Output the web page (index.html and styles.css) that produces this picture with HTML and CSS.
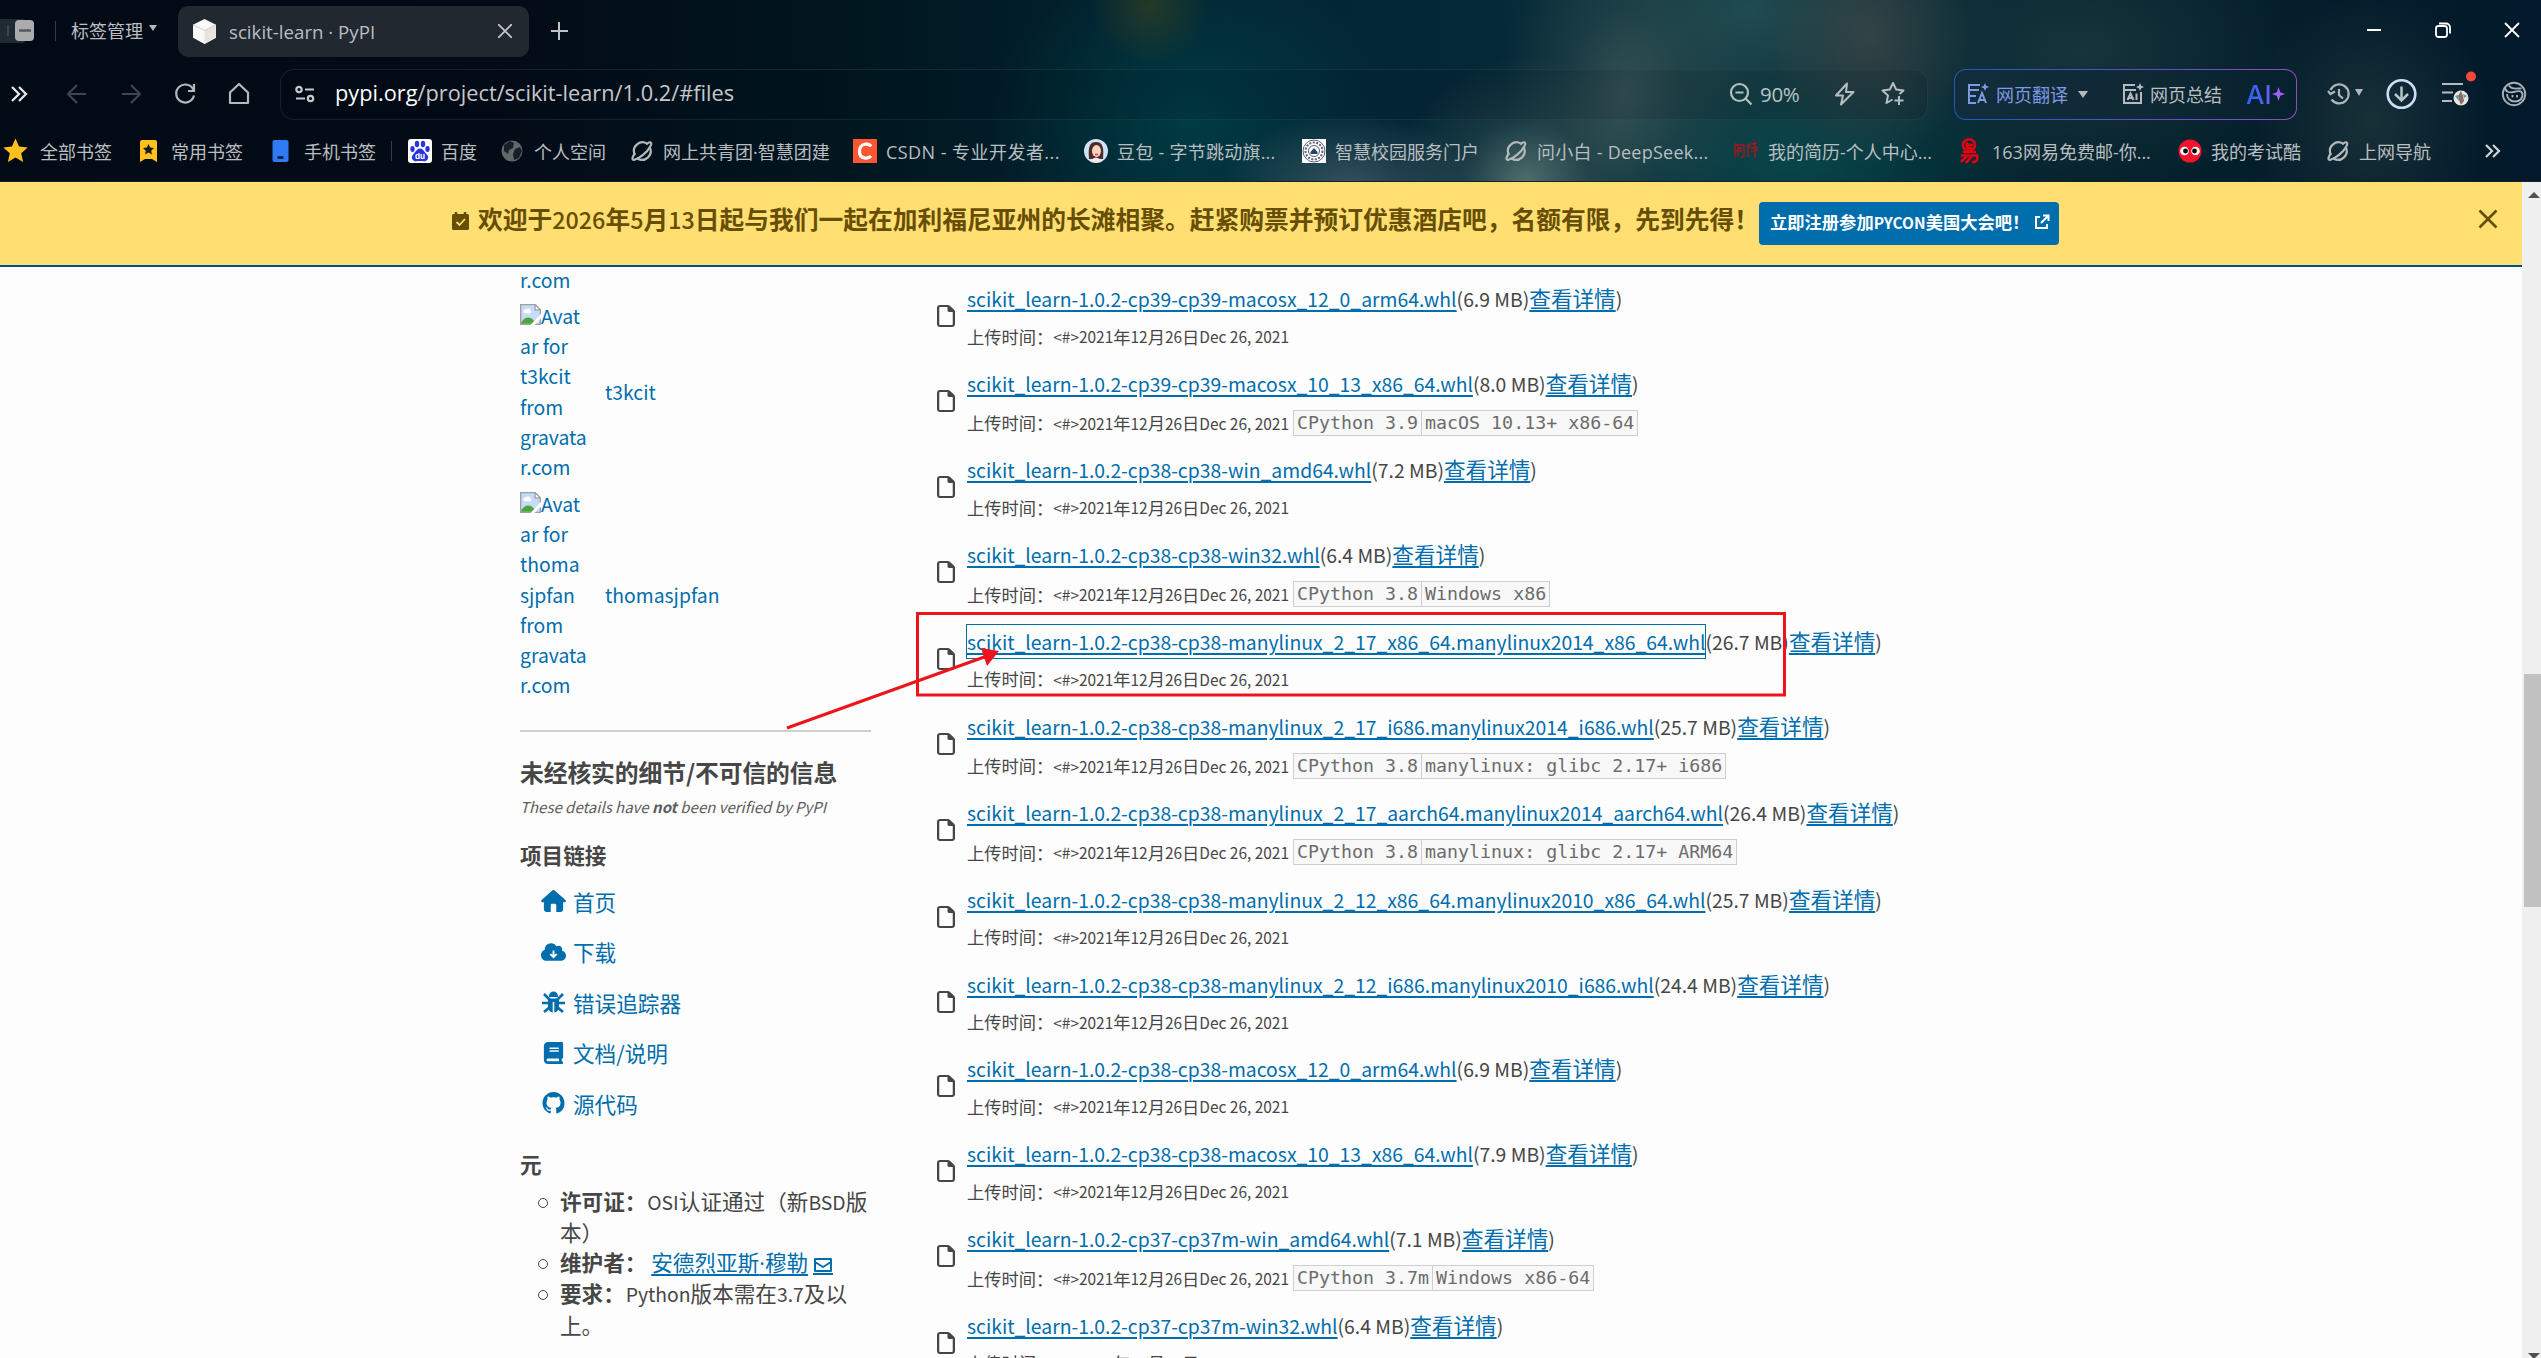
FILE: index.html
```html
<!DOCTYPE html>
<html lang="zh-CN">
<head>
<meta charset="utf-8">
<title>scikit-learn · PyPI</title>
<link rel="stylesheet" href="styles.css">
</head>
<body>
<svg class="defs" width="0" height="0">
  <defs>
    <symbol id="planet" viewBox="0 0 24 24"><g fill="none" stroke="#b3b8ba" stroke-width="2.2" stroke-linecap="round"><path d="M4.500 15A8.600 8.600 0 0 1 17 4.600M19.800 8.500A8.600 8.600 0 0 1 7.500 19.500"/><path d="M17 4.600C21 2 22.500 3.500 20 8 17 13.500 9.500 19.500 4.500 20.800 1.500 21.300 2 18.500 4.500 15"/></g></symbol>
    <symbol id="file" viewBox="0 0 384 512" preserveAspectRatio="none"><path fill="#464646" d="M320 464c8.800 0 16-7.200 16-16V160H256c-17.700 0-32-14.300-32-32V48H64c-8.800 0-16 7.200-16 16V448c0 8.800 7.200 16 16 16H320zM0 64C0 28.700 28.700 0 64 0H229.500c17 0 33.300 6.700 45.300 18.700l90.500 90.500c12 12 18.700 28.300 18.700 45.300V448c0 35.300-28.700 64-64 64H64c-35.300 0-64-28.700-64-64V64z"/></symbol>
    <symbol id="broken" viewBox="0 0 16 16"><path d="M.5.500h11l4 4v11H.5z" fill="#c5dbf8" stroke="#a0a0a0"/><path d="M2.500 6a1.500 1.500 0 0 1 2-1.800 1.800 1.800 0 0 1 3.300.6A1.200 1.200 0 0 1 8 7H3z" fill="#fff"/><path d="M1 15v-1c2-4 6-5 9-2l1 1-2 2z" fill="#51a33d"/><path d="M16 7.500 8 16h3l5-5z" fill="#fff"/><path d="M11.500.500v4h4z" fill="#fff" stroke="#a0a0a0"/></symbol>
  </defs>
</svg>

<header class="chrome">
  <div class="tabs">
    <svg class="side" width="36" height="26"><rect x="-4" y="1" width="30" height="24" rx="4" fill="#202a33"/><path d="M8 7v11" stroke="#3c444c" stroke-width="2"/><rect x="15" y="2" width="19" height="21" rx="4" fill="#a9abad"/><path d="M19 12.500h12" stroke="#55595d" stroke-width="2.500"/></svg>
    <i class="rule"></i>
    <div class="manage">标签管理<i class="caret"></i></div>
    <div class="tab">
      <svg width="25" height="25" viewBox="0 0 24 24"><path d="M12 0 23 5.500v12.500L12 24 1 18V5.500z" fill="#fafaf8"/><path d="M12 11v13l11-6V5.500z" fill="#e5e4df"/><path d="M1 5.500 12 11l11-5.500" fill="none" stroke="#c9c9c3" stroke-width=".8"/></svg>
      <span class="tab-title">scikit-learn · PyPI</span>
      <svg width="14" height="14"><path d="m0 0 14 14M14 0 0 14" stroke="#c3c6c9" stroke-width="1.800"/></svg>
    </div>
    <svg width="18" height="18"><path d="M8 0v18M0 9h17" stroke="#bfc3c6" stroke-width="2"/></svg>
    <div class="window-buttons">
      <svg width="16" height="16"><path d="M1 8h14" stroke="#fff" stroke-width="2"/></svg>
      <svg width="16" height="16"><g fill="none" stroke="#fff" stroke-width="1.800"><rect x="1" y="4" width="11" height="11" rx="2.500"/><path d="M4 1.500h7a4 4 0 0 1 4 4v6"/></g></svg>
      <svg width="16" height="16"><path d="m1 1 14 14M15 1 1 15" stroke="#fff" stroke-width="1.800"/></svg>
    </div>
  </div>

  <div class="toolbar">
    <svg width="26" height="26"><path d="m3 6 7 7-7 7M10 6l7 7-7 7" fill="none" stroke="#e4e6e7" stroke-width="2.300"/></svg>
    <svg width="24" height="24"><path d="M21 12H3M12 3l-9 9 9 9" fill="none" stroke="#3c4850" stroke-width="2"/></svg>
    <svg width="24" height="24"><path d="M3 12h18M12 3l9 9-9 9" fill="none" stroke="#3c4850" stroke-width="2"/></svg>
    <svg width="24" height="24"><path d="M20.500 8A9 9 0 1 0 21 13.500M21 2v7h-6" fill="none" stroke="#b3b8bc" stroke-width="2.200"/></svg>
    <svg width="24" height="24"><path d="M3 10.500 12 2l9 8.500V21H3z" fill="none" stroke="#b3b8bc" stroke-width="2.200" stroke-linejoin="round"/></svg>
    <div class="url">
      <svg width="20" height="18"><g fill="none" stroke="#c6cacc" stroke-width="2.200"><circle cx="4" cy="4.500" r="2.700"/><circle cx="15.500" cy="13.500" r="2.700"/><path d="M10 4.500h9M1 13.500h9"/></g></svg>
      <span class="address"><b>pypi.org</b>/project/scikit-learn/1.0.2/#files</span>
      <svg width="24" height="24"><g fill="none" stroke="#b5bfc1" stroke-width="2.200"><circle cx="10.500" cy="10.500" r="8.500"/><path d="m16.500 16.500 6 6M6.500 10.500h8"/></g></svg>
      <span class="zoom">90%</span>
      <svg class="bolt" width="24" height="24"><path d="M14 1.500 3 13.500h7l-2 9L20.500 10H13z" fill="none" stroke="#b5bfc1" stroke-width="2" stroke-linejoin="round"/></svg>
      <svg class="fav" width="26" height="26"><path d="M12.500 18.500 6.500 22 8 14.500 2.500 9.500l7.300-.9L13 2l3.200 6.600 7.300.9-4 3.500M19 15v9M14.500 19.500h9" fill="none" stroke="#b5bfc1" stroke-width="2" stroke-linejoin="round"/></svg>
    </div>
    <div class="ai-box">
      <svg width="22" height="22"><g fill="none" stroke="#7f9ae3" stroke-width="2"><path d="M13 2H2v18h7M2 7h10M2 13h7M11 20l4-10 4 10M12 17h6"/></g><path d="M18 0l1.200 2.800L22 4l-2.800 1.200L18 8l-1.200-2.800L14 4l2.800-1.200z" fill="#7f9ae3"/></svg>
      <span class="translate">网页翻译</span><i class="caret"></i>
      <svg class="sum" width="22" height="22"><path d="M13 2H2v18h17V9M2 7h12M5.500 17l3-6.500 3 6.500M6.500 15h4M14.500 10.500V17" fill="none" stroke="#b5bcc1" stroke-width="2"/><path d="M18 0l1.200 2.800L22 4l-2.800 1.200L18 8l-1.200-2.800L14 4l2.800-1.200z" fill="#b5bcc1"/></svg>
      <span class="summary">网页总结</span>
      <span class="ai">AI</span>
      <svg width="13" height="16"><path d="M6.500 1 8.200 6.300 13 8l-4.800 1.700L6.500 15 4.800 9.700 0 8l4.800-1.700z" fill="#9b62f6"/></svg>
    </div>
    <div class="clock"><svg width="24" height="24"><path d="M3.500 8A9.500 9.500 0 1 1 4.500 17.500M1 9l2.500 3L8 9.500M12 7v6l4 3.500" fill="none" stroke="#aeb6bb" stroke-width="2.200"/></svg><i class="caret"></i></div>
    <svg class="download" width="32" height="32"><circle cx="15.500" cy="16" r="13.800" fill="none" stroke="#cfdcf8" stroke-width="2.600"/><path d="M15.500 8.500v14M9 16l6.500 6.500L22 16" fill="none" stroke="#b9c2cb" stroke-width="2.500"/></svg>
    <svg class="menu" width="36" height="44"><path d="M1 16h21M1 24.500h11M1 33h10" stroke="#b5bcc1" stroke-width="2.200"/><circle cx="20" cy="30" r="7.500" fill="#e9e5df"/><path d="M20 23l-3 5 1 4 2 5 3-4-1-5z" fill="#8d6a64"/><path d="M14 28l3-1 1 6zM22 26l4 2-3 2z" fill="#39a8ad"/><circle cx="30" cy="8.500" r="5" fill="#f3493a"/></svg>
    <svg class="spiral" width="26" height="26"><g fill="none" stroke="#a7b0b6" stroke-width="1.900"><circle cx="13" cy="13" r="11.200"/><path d="M4 6c0 5 4.500 6 8.500 5s8-2 9 2c.5 4-2.500 7.500-7.500 7.500-5 0-8-3.500-8-7.500M8 4.500c3 5 8 2.500 12.500 3"/><path d="M11.500 14v2.500M16 14v2.500"/></g></svg>
  </div>

  <nav class="bookmarks">
    <a><svg width="25" height="25" viewBox="0 0 24 24"><path d="m12 .5 3.400 7.700 8.300.9-6.200 5.600 1.800 8.300L12 18.800 4.700 23l1.800-8.300L.3 9.100l8.300-.9z" fill="#ffc01e"/></svg><span>全部书签</span></a>
    <a><svg width="24" height="24"><path d="M2 3q0-2 2-2h13q2 0 2 2v20l-5-3H7l-5 3z" fill="#ffc01e"/><path d="m10.500 5 1.700 3.500 3.800.5-2.800 2.700.7 3.800-3.400-1.900L7.100 15.500l.7-3.800L5 9l3.800-.5z" fill="#151a20"/></svg><span>常用书签</span></a>
    <a><svg width="24" height="24"><rect x="1.500" y="1" width="16" height="22" rx="2" fill="#2f7af5"/><path d="M6.500 18.500h6" stroke="#0b1633" stroke-width="2.500"/></svg><span>手机书签</span></a>
    <i class="rule"></i>
    <a><svg width="24" height="24"><rect width="24" height="24" rx="3" fill="#fff"/><g fill="#2932e1"><ellipse cx="4.500" cy="10" rx="2.200" ry="3"/><ellipse cx="9" cy="5" rx="2.200" ry="3.200"/><ellipse cx="15" cy="5" rx="2.200" ry="3.200"/><ellipse cx="19.500" cy="10" rx="2.200" ry="3"/><path d="M12 9.500c3 0 4 3 6 5s3 3.500 1.500 6-4.500 1.500-7.500 1.500-6 1-7.500-1.500 0-4.500 1.500-6 3-5 6-5z"/></g><text x="12" y="20" font-size="8" font-weight="700" fill="#fff" text-anchor="middle" font-family="Inter">du</text></svg><span>百度</span></a>
    <a><svg width="24" height="24"><circle cx="11" cy="12" r="10.500" fill="#62676b"/><path d="M3 6l6-4 4 2-1 5-4 2-1 4-4-3zM14 10l5-2 2 4-3 7-5 2-1-6z" fill="#16202a"/></svg><span>个人空间</span></a>
    <a><svg width="24" height="24"><use href="#planet"/></svg><span>网上共青团·智慧团建</span></a>
    <a class="csdn"><svg width="24" height="24"><rect width="24" height="24" fill="#fc5531"/><path d="M18 7.500C16 4 7 3.500 6.500 12S15.500 20 18 17" fill="none" stroke="#fff" stroke-width="3.200"/></svg><span>CSDN - 专业开发者...</span></a>
    <a class="mixed"><svg width="24" height="24"><circle cx="12" cy="12" r="12" fill="#cfe4fb"/><path d="M5 20C4 9 5 3 12 3s8 6 7 17z" fill="#4a2c28"/><ellipse cx="12.500" cy="12" rx="4.500" ry="6" fill="#f8d2c0"/><path d="M6 22q6-7 12 0l-6 2z" fill="#f6e9e9"/><path d="M11 15.500h3" stroke="#d23b3b" stroke-width="1.500"/></svg><span>豆包 - 字节跳动旗...</span></a>
    <a><svg width="24" height="24"><rect width="24" height="24" fill="#fff"/><g fill="none" stroke="#5a5f7c"><circle cx="12" cy="12" r="11"/><circle cx="12" cy="12" r="8.500" stroke-dasharray="2 1.500" stroke-width="2"/><circle cx="12" cy="12" r="5.500"/></g><path d="M8.500 13l3.500-4 3.500 4v2h-7z" fill="#27406e"/></svg><span>智慧校园服务门户</span></a>
    <a class="mixed"><svg width="24" height="24"><use href="#planet"/></svg><span>问小白 - DeepSeek...</span></a>
    <a><svg width="26" height="24"><path d="M2 6h9v11l-3 2M4 9h5M3 12h6M5 8v9M2 4v14M15 5v13M18 4l-3 6M19 5l5-1M22 3v16M18 9h7M18 13l7-2" fill="none" stroke="#b5121c" stroke-width="1.300"/></svg><span>我的简历-个人中心...</span></a>
    <a><svg width="24" height="26"><g fill="none" stroke="#e60012" stroke-width="2.600"><ellipse cx="10" cy="7" rx="6" ry="5.700"/><path d="M7 7h7M13 10H9Q6 7 9 4.500M4 14h13M2 17.500h16q2 6-5 7M8 18l-6 6M13 18l-6 7"/></g></svg><span>163网易免费邮-你...</span></a>
    <a><svg width="24" height="24"><circle cx="12" cy="12" r="11.500" fill="#f4132d"/><circle cx="6.500" cy="12" r="4.300" fill="#fff"/><circle cx="17.500" cy="12" r="4.300" fill="#fff"/><circle cx="7.500" cy="12" r="2.400"/><circle cx="16.500" cy="12" r="2.400"/></svg><span>我的考试酷</span></a>
    <a><svg width="24" height="24"><use href="#planet"/></svg><span>上网导航</span></a>
    <svg width="18" height="20"><path d="m2 4 6 6-6 6M9 4l6 6-6 6" fill="none" stroke="#d0d4d6" stroke-width="2.200"/></svg>
  </nav>
</header>

<div class="viewport">
  <div class="page">
    <div class="banner">
      <svg class="calendar" width="17" height="18"><path d="M4 0v3M13 0v3" stroke="#664e04" stroke-width="2.500"/><path d="M1.500 2h14q1.500 0 1.500 1.500v13q0 1.500-1.500 1.500h-14Q0 18 0 16.500v-13Q0 2 1.500 2z" fill="#664e04"/><path d="m4.500 10 3 3 5.500-6" fill="none" stroke="#ffde72" stroke-width="1.800"/></svg>
      <strong>欢迎于<span class="n">2026</span>年<span class="n">5</span>月<span class="n">13</span>日起与我们一起在加利福尼亚州的长滩相聚。赶紧购票并预订优惠酒店吧，名额有限，先到先得！</strong>
      <a class="register">立即注册参加<span>PYCON</span>美国大会吧！<svg width="16" height="16"><path d="M6 3H2v11h11v-4M9 1.500h5.500V7M14.500 1.500 7 9" fill="none" stroke="#fff" stroke-width="2"/></svg></a>
      <svg class="dismiss" width="20" height="20"><path d="m1.500 1.500 17 17M18.500 1.500l-17 17" stroke="#664e04" stroke-width="2.600"/></svg>
    </div>

    <div class="columns">
      <aside class="sidebar">
        <div class="person first"><div class="alt">r.com</div></div>
        <div class="person"><div class="alt"><svg width="21" height="21"><use href="#broken"/></svg>Avat<br>ar for<br>t3kcit<br>from<br>gravata<br>r.com</div><a>t3kcit</a></div>
        <div class="person"><div class="alt"><svg width="21" height="21"><use href="#broken"/></svg>Avat<br>ar for<br>thoma<br>sjpfan<br>from<br>gravata<br>r.com</div><a>thomasjpfan</a></div>
        <hr>
        <h3>未经核实的细节/不可信的信息</h3>
        <p class="note">These details have <b>not</b> been verified by PyPI</p>
        <h4>项目链接</h4>
        <ul class="links">
          <li><svg width="25" height="22" viewBox="0 0 576 512"><path fill="#006dad" d="M575.800 255.500c0 18-15 32.100-32 32.100h-32l.7 160.200c.2 35.500-28.500 64.300-64 64.300H352V352c0-17.700-14.300-32-32-32h-64c-17.700 0-32 14.300-32 32v160H128.100c-35.300 0-64-28.700-64-64V287.600H32c-18 0-32-14-32-32.100 0-9 3-17 10-24L266.400 8c7-7 15-8 22-8s15 2 21 7l255.400 224.500c8 7 12 15 11 24z"/></svg>首页</li>
          <li><svg width="25" height="20" viewBox="0 0 640 512"><path fill="#006dad" d="M144 480C64.500 480 0 415.500 0 336c0-62.800 40.200-116.200 96.200-135.900-.1-2.700-.2-5.400-.2-8.100 0-88.400 71.600-160 160-160 59.300 0 111 32.200 138.700 80.200C409.900 102 428.300 96 448 96c53 0 96 43 96 96 0 12.200-2.300 23.800-6.400 34.600C596 238.400 640 290.100 640 352c0 70.700-57.300 128-128 128H144z"/><path d="M320 215v160M240 310l80 80 80-80" fill="none" stroke="#fff" stroke-width="48"/></svg>下载</li>
          <li><svg width="25" height="22"><g fill="none" stroke="#006dad" stroke-width="2.600"><path d="M1 12h6M18 12h6M3 3l6 6M22 3l-6 6M3 21l6-5M22 21l-6-5"/></g><path d="M8 5a4.500 4.500 0 0 1 9 0v1H8zM7 7.500h11V15a5.500 5.500 0 0 1-4.700 6.500V11h-1.600v10.500A5.500 5.500 0 0 1 7 15z" fill="#006dad"/></svg>错误追踪器</li>
          <li><svg width="25" height="22" viewBox="-32 0 512 512"><path fill="#006dad" d="M96 0C43 0 0 43 0 96V416c0 53 43 96 96 96H416c17.700 0 32-14.300 32-32s-14.300-32-32-32V384c17.700 0 32-14.300 32-32V32c0-17.700-14.300-32-32-32H96zm0 384H352v64H96c-17.700 0-32-14.300-32-32s14.300-32 32-32zm32-240c0-8.800 7.200-16 16-16H336c8.800 0 16 7.200 16 16s-7.200 16-16 16H144c-8.800 0-16-7.200-16-16zm16 48H336c8.800 0 16 7.200 16 16s-7.200 16-16 16H144c-8.800 0-16-7.200-16-16s7.200-16 16-16z"/></svg>文档/说明</li>
          <li><svg width="25" height="22" viewBox="-1 0 18 16"><path fill="#006dad" d="M8 0C3.580 0 0 3.580 0 8c0 3.540 2.290 6.530 5.470 7.590.4.070.55-.17.55-.38 0-.19-.01-.82-.01-1.490-2.010.37-2.530-.49-2.690-.94-.09-.23-.48-.94-.82-1.130-.28-.15-.68-.52-.01-.53.63-.01 1.080.58 1.230.82.720 1.210 1.870.87 2.330.66.070-.52.280-.87.510-1.070-1.780-.2-3.640-.89-3.640-3.950 0-.87.310-1.590.82-2.150-.08-.2-.36-1.020.08-2.120 0 0 .67-.21 2.200.82.640-.18 1.320-.27 2-.27s1.360.09 2 .27c1.530-1.040 2.200-.82 2.200-.82.440 1.100.160 1.920.08 2.120.51.560.82 1.270.82 2.150 0 3.070-1.870 3.750-3.650 3.950.290.250.540.730.540 1.480 0 1.070-.01 1.930-.01 2.200 0 .210.150.460.550.380A8.010 8.010 0 0 0 16 8c0-4.420-3.580-8-8-8z"/></svg>源代码</li>
        </ul>
        <h4>元</h4>
        <ul class="meta">
          <li><b>许可证：</b> <span class="m">OSI</span>认证通过（新<span class="m">BSD</span>版<br>本）</li>
          <li><b>维护者：</b> <a>安德烈亚斯<span class="dot">·</span>穆勒</a> <svg class="mail" width="20" height="18"><path d="M2 2h16v12H2zM2 5l8 5 8-5" fill="none" stroke="#006dad" stroke-width="2" stroke-linejoin="round"/><path d="M0 17h20" stroke="#006dad" stroke-width="2"/></svg></li>
          <li><b>要求：</b> <span class="m">Python</span>版本需在<span class="m">3.7</span>及以<br>上。</li>
        </ul>
      </aside>
      <main class="files" id="files"></main>
    </div>
  </div>
  <div class="scrollbar"><i class="up"></i><i class="thumb"></i><i class="down"></i></div>
</div>

<svg class="annotation" width="1020" height="130"><rect x="132.500" y="13.500" width="867" height="81.500" fill="none" stroke="#ed141c" stroke-width="3"/><path d="M2 128 202 56" stroke="#ed141c" stroke-width="3"/><path d="m214 51-18-3 6 18z" fill="#ed141c"/></svg>
<script src="files.js"></script>
</body>
</html>
```
FILE: files.js
```js
// name, size, then the optional interpreter and platform tags
const files = [
  ['cp39-cp39-macosx_12_0_arm64', '6.9'],
  ['cp39-cp39-macosx_10_13_x86_64', '8.0', 'CPython 3.9', 'macOS 10.13+ x86-64'],
  ['cp38-cp38-win_amd64', '7.2'],
  ['cp38-cp38-win32', '6.4', 'CPython 3.8', 'Windows x86'],
  ['cp38-cp38-manylinux_2_17_x86_64.manylinux2014_x86_64', '26.7'],
  ['cp38-cp38-manylinux_2_17_i686.manylinux2014_i686', '25.7', 'CPython 3.8', 'manylinux: glibc 2.17+ i686'],
  ['cp38-cp38-manylinux_2_17_aarch64.manylinux2014_aarch64', '26.4', 'CPython 3.8', 'manylinux: glibc 2.17+ ARM64'],
  ['cp38-cp38-manylinux_2_12_x86_64.manylinux2010_x86_64', '25.7'],
  ['cp38-cp38-manylinux_2_12_i686.manylinux2010_i686', '24.4'],
  ['cp38-cp38-macosx_12_0_arm64', '6.9'],
  ['cp38-cp38-macosx_10_13_x86_64', '7.9'],
  ['cp37-cp37m-win_amd64', '7.1', 'CPython 3.7m', 'Windows x86-64'],
  ['cp37-cp37m-win32', '6.4'],
];

document.getElementById('files').innerHTML = files.map(([name, size, ...tags], i) => `
  <div class="file${tags.length ? ' tagged' : ''}${i === 4 ? ' focused' : ''}">
    <svg class="file-icon" width="18" height="22"><use href="#file"/></svg>
    <div>
      <div class="file-name"><a>scikit_learn-1.0.2-${name}.whl</a><span class="size">(${size} MB)</span><a class="view">查看详情</a>)</div>
      <div class="file-date"><b>上传时间：</b>&lt;#&gt;2021<b>年</b>12<b>月</b>26<b>日</b>Dec 26, 2021${tags.length ? `<span class="tags">${tags.map(t => `<code>${t}</code>`).join('')}</span>` : ''}</div>
    </div>
  </div>`).join('');
```
FILE: styles.css
```css
* { box-sizing: border-box; }
body { margin: 0; width: 2541px; height: 1358px; overflow: hidden; position: relative; background: #fdfdfd; color: #464646; font-family: "Noto Sans CJK SC", sans-serif; }
svg { display: block; flex: none; }
.defs { position: absolute; }
ul { list-style: none; margin: 0; padding: 0; }

/* browser window */
.chrome {
  height: 182px; color: #b9bec1; border-bottom: 1px solid #10222b; overflow: hidden;
  font: 18px "Open Sans", "Noto Sans CJK SC", sans-serif;
  background:
    radial-gradient(ellipse 130px 130px at 1525px 185px, rgba(120,150,140,.65), rgba(80,110,105,.25) 50%, transparent),
    radial-gradient(ellipse 130px 70px at 1350px 185px, rgba(100,120,130,.5), transparent),
    radial-gradient(ellipse 120px 170px at 1625px 95px, rgba(90,110,105,.5), rgba(70,95,92,.22) 50%, transparent),
    radial-gradient(ellipse 100px 130px at 1870px 35px, rgba(85,78,75,.5), transparent),
    radial-gradient(ellipse 60px 60px at 1150px 5px, rgba(80,75,25,.45), transparent),
    radial-gradient(ellipse 260px 200px at 1750px 10px, rgba(48,98,98,.6), rgba(40,85,88,.3) 50%, transparent),
    radial-gradient(ellipse 230px 100px at 1800px 165px, rgba(0,85,85,.6), transparent),
    radial-gradient(ellipse 200px 170px at 1190px 120px, rgba(0,75,80,.6), transparent),
    radial-gradient(ellipse 220px 150px at 2080px 50px, rgba(35,65,70,.6), transparent),
    radial-gradient(ellipse 120px 130px at 2370px 120px, rgba(40,65,65,.55), transparent),
    linear-gradient(90deg, #020a15 0, #030b17 20%, #01161f 33%, #01222f 45%, #042737 55%, #082a35 68%, #04212c 82%, #03192b 100%);
}
.tabs, .toolbar, .bookmarks { display: grid; align-items: center; }
.tabs { height: 62px; grid-template-columns: 55px 16px 107px 351px 22px 18px 1fr; }
.rule { width: 1px; height: 20px; background: #343c44; }
.caret { display: inline-block; border: 5px solid transparent; border-top: 7px solid #b3b8bc; border-bottom: 0; }
.manage { display: flex; align-items: center; gap: 6px; line-height: 62px; }
.manage .caret { border-width: 6px 4px 0; margin-top: -6px; }
.tab { height: 51px; border-radius: 10px; background: rgba(44,51,58,.75); display: flex; align-items: center; padding: 0 17px 0 14px; }
.tab-title { flex: 1; margin-left: 12px; font-size: 18.700px; }
.tab + svg { grid-column: 6; }
.window-buttons { display: flex; justify-content: flex-end; gap: 53px; padding: 0 21px 3px 0; }
.toolbar { height: 64px; grid-template-columns: 65px 54px 54px 54px 53px 1648px 26px 343px 30px 61px 54px 60px 1fr; }
.toolbar > svg:first-child { margin-left: 9px; }
.url { height: 51px; border: 1px solid rgba(60,85,90,.3); border-radius: 14px; display: flex; align-items: center; padding: 0 21px 0 14px; background: rgba(0,10,15,.1); }
.address { flex: 1; margin-left: 20px; font-size: 21.750px; color: #c5c8ca; line-height: 46px; padding-bottom: 2px; }
.address b { font-weight: 400; color: #fff; }
.zoom { margin-left: 7px; width: 68px; font-size: 20.500px; letter-spacing: -.3px; color: #b9c5c5; }
.bolt { margin-left: 5px; }
.fav { margin-left: 23px; }
.ai-box { grid-column: 8; height: 51px; border-radius: 12px; border: 1.5px solid transparent; background: linear-gradient(90deg, #112d3b, #0f2935 50%, #07202d) padding-box, linear-gradient(90deg, #2356c0, #5b50c8 55%, #8f4dba) border-box; display: flex; align-items: center; padding-left: 12px; }
.translate { margin: 0 10px 0 7px; color: #7f9ae3; }
.sum { margin-left: 34px; }
.summary { margin: 0 24px 0 6px; }
.ai { font: 500 26px "Inter", sans-serif; background: linear-gradient(90deg, #2862f6, #6b60f6); background-clip: text; color: transparent; }
.clock { grid-column: 10; display: flex; align-items: center; gap: 4px; }
.clock .caret { margin-top: -4px; border-width: 7px 4.500px 0; }
.download { margin-left: -2px; }
.menu { margin: -9px 0 0 -1px; }
.spiral { margin-left: -1px; }
.bookmarks { height: 49px; padding-left: 3px; grid-template-columns: 135px 133px 120px 17px 93px 129px 223px 231px 218px 202px 229px 226px 219px 148px 158px 20px; }
.bookmarks a { display: flex; align-items: center; gap: 9px; white-space: nowrap; }
.bookmarks a:first-child { gap: 12px; }
.bookmarks span { font-size: 18px; }
.bookmarks .csdn span { letter-spacing: .45px; }
.bookmarks .mixed span { letter-spacing: .25px; }

/* page */
.viewport { display: flex; height: 1176px; }
.page { flex: 1; overflow: hidden; }
.banner { height: 85px; border-bottom: 2px solid #00507d; background: #ffde72; display: flex; align-items: center; padding: 0 24px 9px 452px; color: #664e04; }
.calendar { margin-top: 3px; }
.banner strong { margin: 0 0 0 9px; padding-bottom: 2px; font-size: 24.750px; font-weight: 700; white-space: nowrap; line-height: 40px; }
.banner .n { font-size: 23.300px; font-weight: 500; }
.register { margin: 8px 0 0 0; width: 300px; height: 43px; border-radius: 4px; background: #006dad; color: #fff; font-size: 17.300px; font-weight: 700; display: flex; align-items: center; padding: 0 0 3px 11px; white-space: nowrap; }
.register span { font-size: 15.500px; }
.register svg { margin-left: auto; margin-right: 9px; }
.dismiss { margin-left: auto; }
.columns { display: flex; padding-left: 520px; }
.sidebar { width: 351px; color: #464646; font-size: 21.600px; }
.person { display: flex; align-items: center; font-size: 19.350px; line-height: 30.160px; color: #006dad; padding-bottom: 7px; }
.person.first { margin-top: -2px; padding-bottom: 6px; }
.alt { width: 85px; }
.alt svg { display: inline-block; vertical-align: -1px; }
hr { border: 0; height: 2px; background: #cfcfcf; margin: 23px 0 0; }
h3, h4 { margin: 0; font-weight: 700; }
h3 { font-size: 23.800px; line-height: 40px; margin-top: 20px; white-space: nowrap; letter-spacing: -.1px; }
.note { margin: 4px 0 0; font-size: 15px; line-height: 22px; font-style: italic; color: #5c5c5c; white-space: nowrap; }
h4 { font-size: 21.600px; line-height: 36px; margin-top: 19px; }
.links { padding: 3px 0 0 21px; color: #006dad; }
.links li { height: 50.500px; display: flex; align-items: center; gap: 7px; }
.meta { padding-left: 40px; margin-top: 4px; line-height: 30.200px; white-space: nowrap; }
.links + h4 { margin-top: 17px; }
.meta li { position: relative; word-spacing: -4px; }
.meta li::before { content: ""; position: absolute; left: -22px; top: 12px; width: 8px; height: 8px; border: 1px solid #464646; border-radius: 50%; }
.meta .m { font-size: 19.350px; }
.meta a { color: #006dad; text-decoration: underline 2px; text-underline-offset: 3px; margin: 0 4px; }
.dot { font-family: "Open Sans", sans-serif; }
.mail { display: inline-block; vertical-align: -4px; }

.files { padding: 9px 0 0 66px; }
.file { height: 84.900px; display: flex; }
.file.tagged { height: 86.500px; }
.file-icon { margin: 29px 12px 0 0; }
.file-name { height: 46px; line-height: 46px; font-size: 19.350px; white-space: nowrap; }
.file-name a { color: #006dad; text-decoration: underline 2px; text-underline-offset: 3px; }
.file-name .view { font-size: 21.600px; line-height: 1; }
.file-date { display: flex; align-items: center; height: 28px; font-size: 15.450px; white-space: pre; }
.file-date b { font-size: 17.250px; font-weight: 400; }
.tagged .file-date { height: 32px; }
.tags { display: flex; margin-left: 4px; }
.tags code { height: 26px; line-height: 23px; padding: 0 3px; border: 1px solid #cfcfcf; background: #f8f8f8; color: #6c6c6c; font-size: 18.300px; font-family: "DejaVu Sans Mono", monospace; }
.tags code + code { margin-left: -1px; }
.focused a:first-child { outline: 1px solid #006dad; padding: 3px 0 2px; }

.scrollbar { width: 19px; background: #f0f0f0; display: flex; flex-direction: column; align-items: flex-end; }
.scrollbar i { display: block; flex: none; }
.up { border: 6px solid transparent; border-bottom: 6px solid #505050; border-top: 0; margin: 10px 1px 0 0; }
.thumb { width: 17px; height: 233px; margin-top: 476px; background: #c1c1c1; }
.down { border: 6px solid transparent; border-top: 6px solid #505050; border-bottom: 0; margin: 446px 1px 0 0; }
.annotation { position: absolute; left: 785px; top: 600px; }
```
